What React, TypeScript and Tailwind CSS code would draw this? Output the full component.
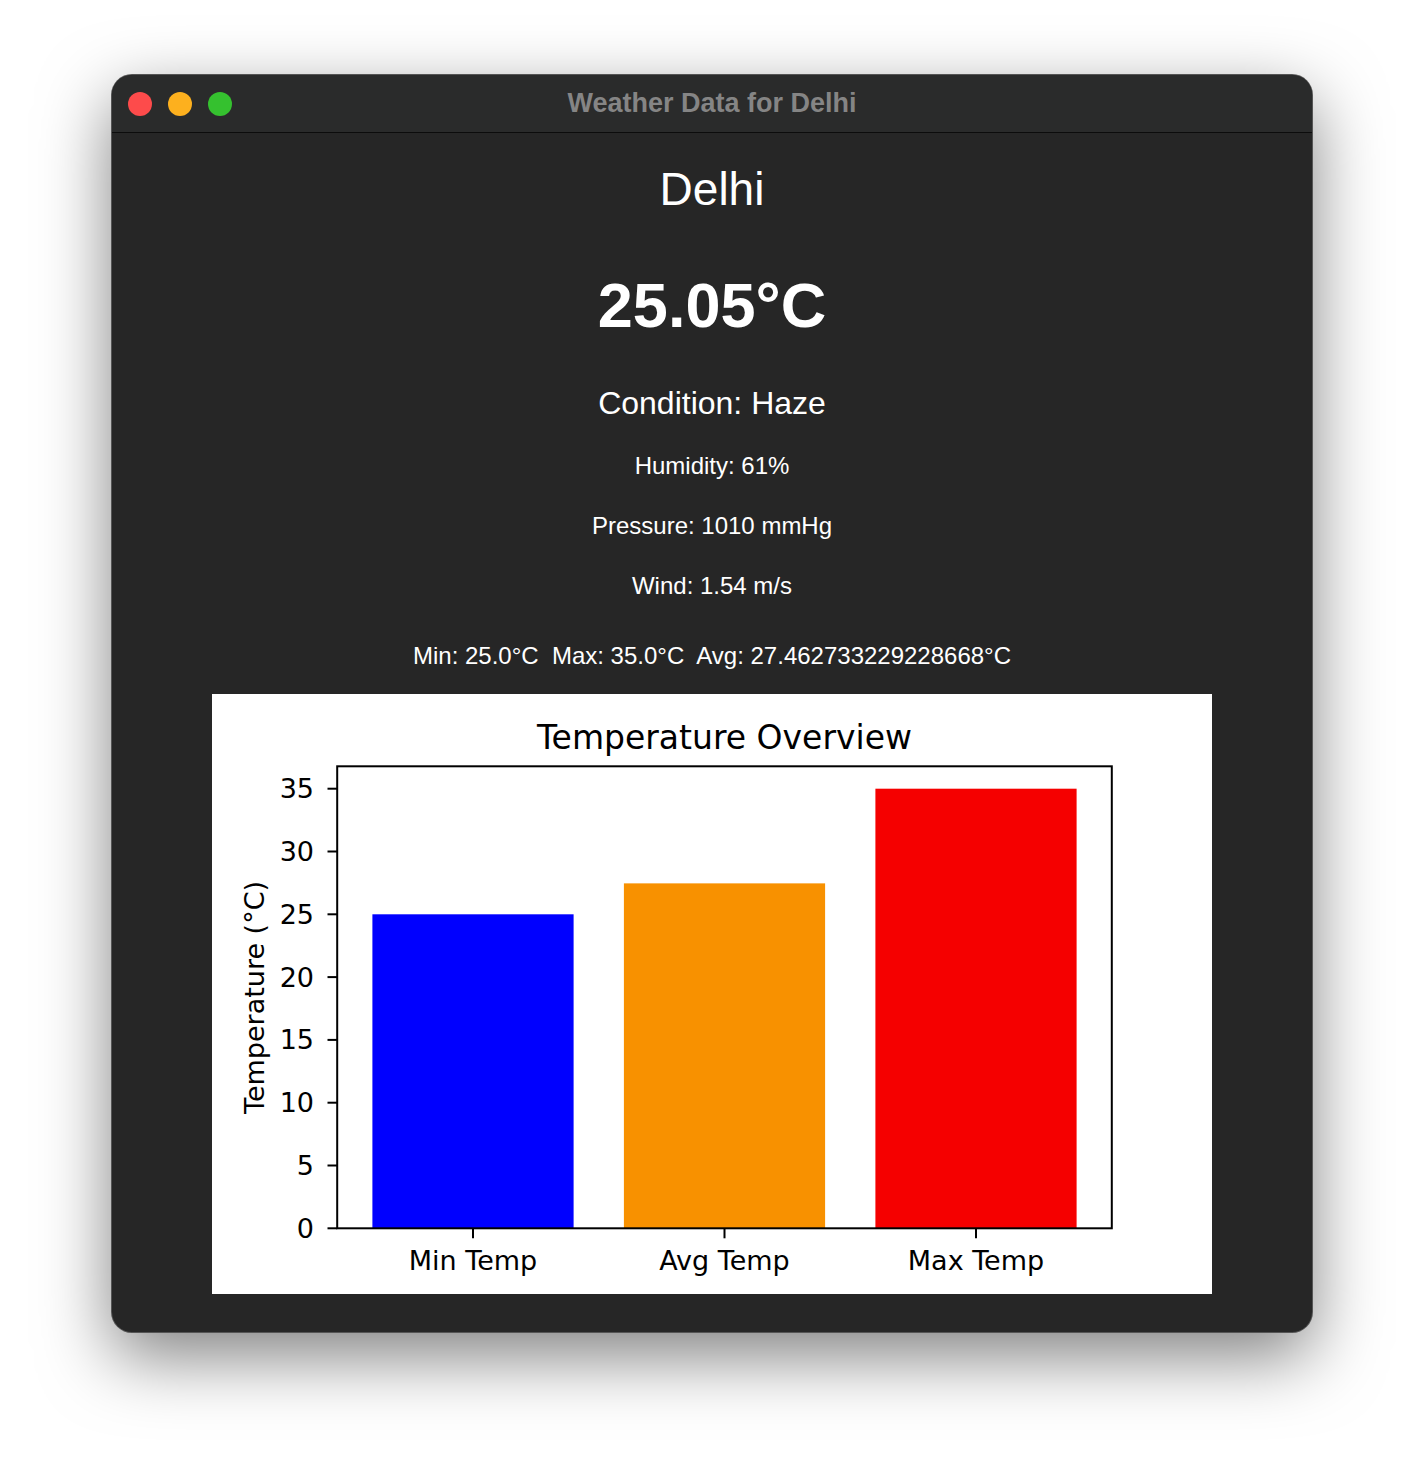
const bars = [
  { label: 'Min Temp', value: 25.0, color: '#0000ff' },
  { label: 'Avg Temp', value: 27.462733229228668, color: '#f89100' },
  { label: 'Max Temp', value: 35.0, color: '#f50000' },
];

// plot geometry inside the 1000x600 figure
const yZero = 534.3;
const yUnit = 12.56;
const xLeft = 125.2;
const xRight = 899.8;
const yTop = 72.3;
const xAt = (i: number) => 261 + i * 251.5;
const yAt = (v: number) => yZero - v * yUnit;

function TemperatureChart() {
  const ticks = [0, 5, 10, 15, 20, 25, 30, 35];
  return (
    <svg width="1000" height="600" viewBox="0 0 1000 600" className="block bg-white">
      <g fontFamily="'DejaVu Sans', sans-serif" fill="#000">
        <text x={(xLeft + xRight) / 2} y={55} fontSize="33" textAnchor="middle">
          Temperature Overview
        </text>

        {bars.map((b, i) => (
          <rect
            key={b.label}
            x={xAt(i) - 100.6}
            y={yAt(b.value)}
            width={201.2}
            height={yZero - yAt(b.value)}
            fill={b.color}
          />
        ))}

        {/* y ticks */}
        {ticks.map((t) => (
          <g key={t}>
            <line x1={115.5} x2={xLeft} y1={yAt(t)} y2={yAt(t)} stroke="#000" strokeWidth="2" />
            <text x={102} y={yAt(t) + 9.5} fontSize="27" textAnchor="end">
              {t}
            </text>
          </g>
        ))}

        {/* x ticks */}
        {bars.map((b, i) => (
          <g key={b.label}>
            <line x1={xAt(i)} x2={xAt(i)} y1={yZero} y2={yZero + 10} stroke="#000" strokeWidth="2" />
            <text x={xAt(i)} y={575.5} fontSize="27" textAnchor="middle">
              {b.label}
            </text>
          </g>
        ))}

        <text x={52} y={303.5} fontSize="27" textAnchor="middle" transform="rotate(-90 52 303.5)">
          Temperature (°C)
        </text>

        {/* axes frame */}
        <rect
          x={xLeft}
          y={yTop}
          width={xRight - xLeft}
          height={yZero - yTop}
          fill="none"
          stroke="#000"
          strokeWidth="2"
        />
      </g>
    </svg>
  );
}

export default function App() {
  return (
    <div className="min-h-screen bg-white pt-[75px] font-['Liberation_Sans',Arial,sans-serif]">
      <div className="mx-auto flex h-[1257px] w-[1200px] flex-col overflow-hidden rounded-[20px] bg-[#262626] shadow-[0_24px_70px_rgba(0,0,0,0.5)] ring-1 ring-[#555]">
        {/* Title bar */}
        <div className="relative flex h-[58px] shrink-0 items-center border-b border-[#0c0c0c] bg-[#2a2b2b] px-4">
          <div className="flex gap-4">
            <span className="h-6 w-6 rounded-full bg-[#fd4b4b]" />
            <span className="h-6 w-6 rounded-full bg-[#fdb01e]" />
            <span className="h-6 w-6 rounded-full bg-[#35c12f]" />
          </div>
          <div className="absolute inset-x-0 top-0 flex h-full items-center justify-center pointer-events-none">
            <span className="text-[27px] font-bold text-[#858585]">Weather Data for Delhi</span>
          </div>
        </div>

        {/* Content */}
        <div className="flex flex-col items-center text-white">
          <p className="mt-[26px] text-[46px] leading-[60px]">Delhi</p>
          <p className="mt-[51px] text-[63px] font-bold leading-[70px]">25.05°C</p>
          <p className="mt-[43px] text-[32px] leading-[40px]">Condition: Haze</p>
          <p className="mt-[28px] text-[24px] leading-[30px]">Humidity: 61%</p>
          <p className="mt-[30px] text-[24px] leading-[30px]">Pressure: 1010 mmHg</p>
          <p className="mt-[30px] text-[24px] leading-[30px]">Wind: 1.54 m/s</p>
          <p className="mt-[40px] whitespace-pre text-[24px] leading-[30px]">
            Min: 25.0°C  Max: 35.0°C  Avg: 27.462733229228668°C
          </p>
          <div className="mt-[23px]">
            <TemperatureChart />
          </div>
        </div>
      </div>
    </div>
  );
}
